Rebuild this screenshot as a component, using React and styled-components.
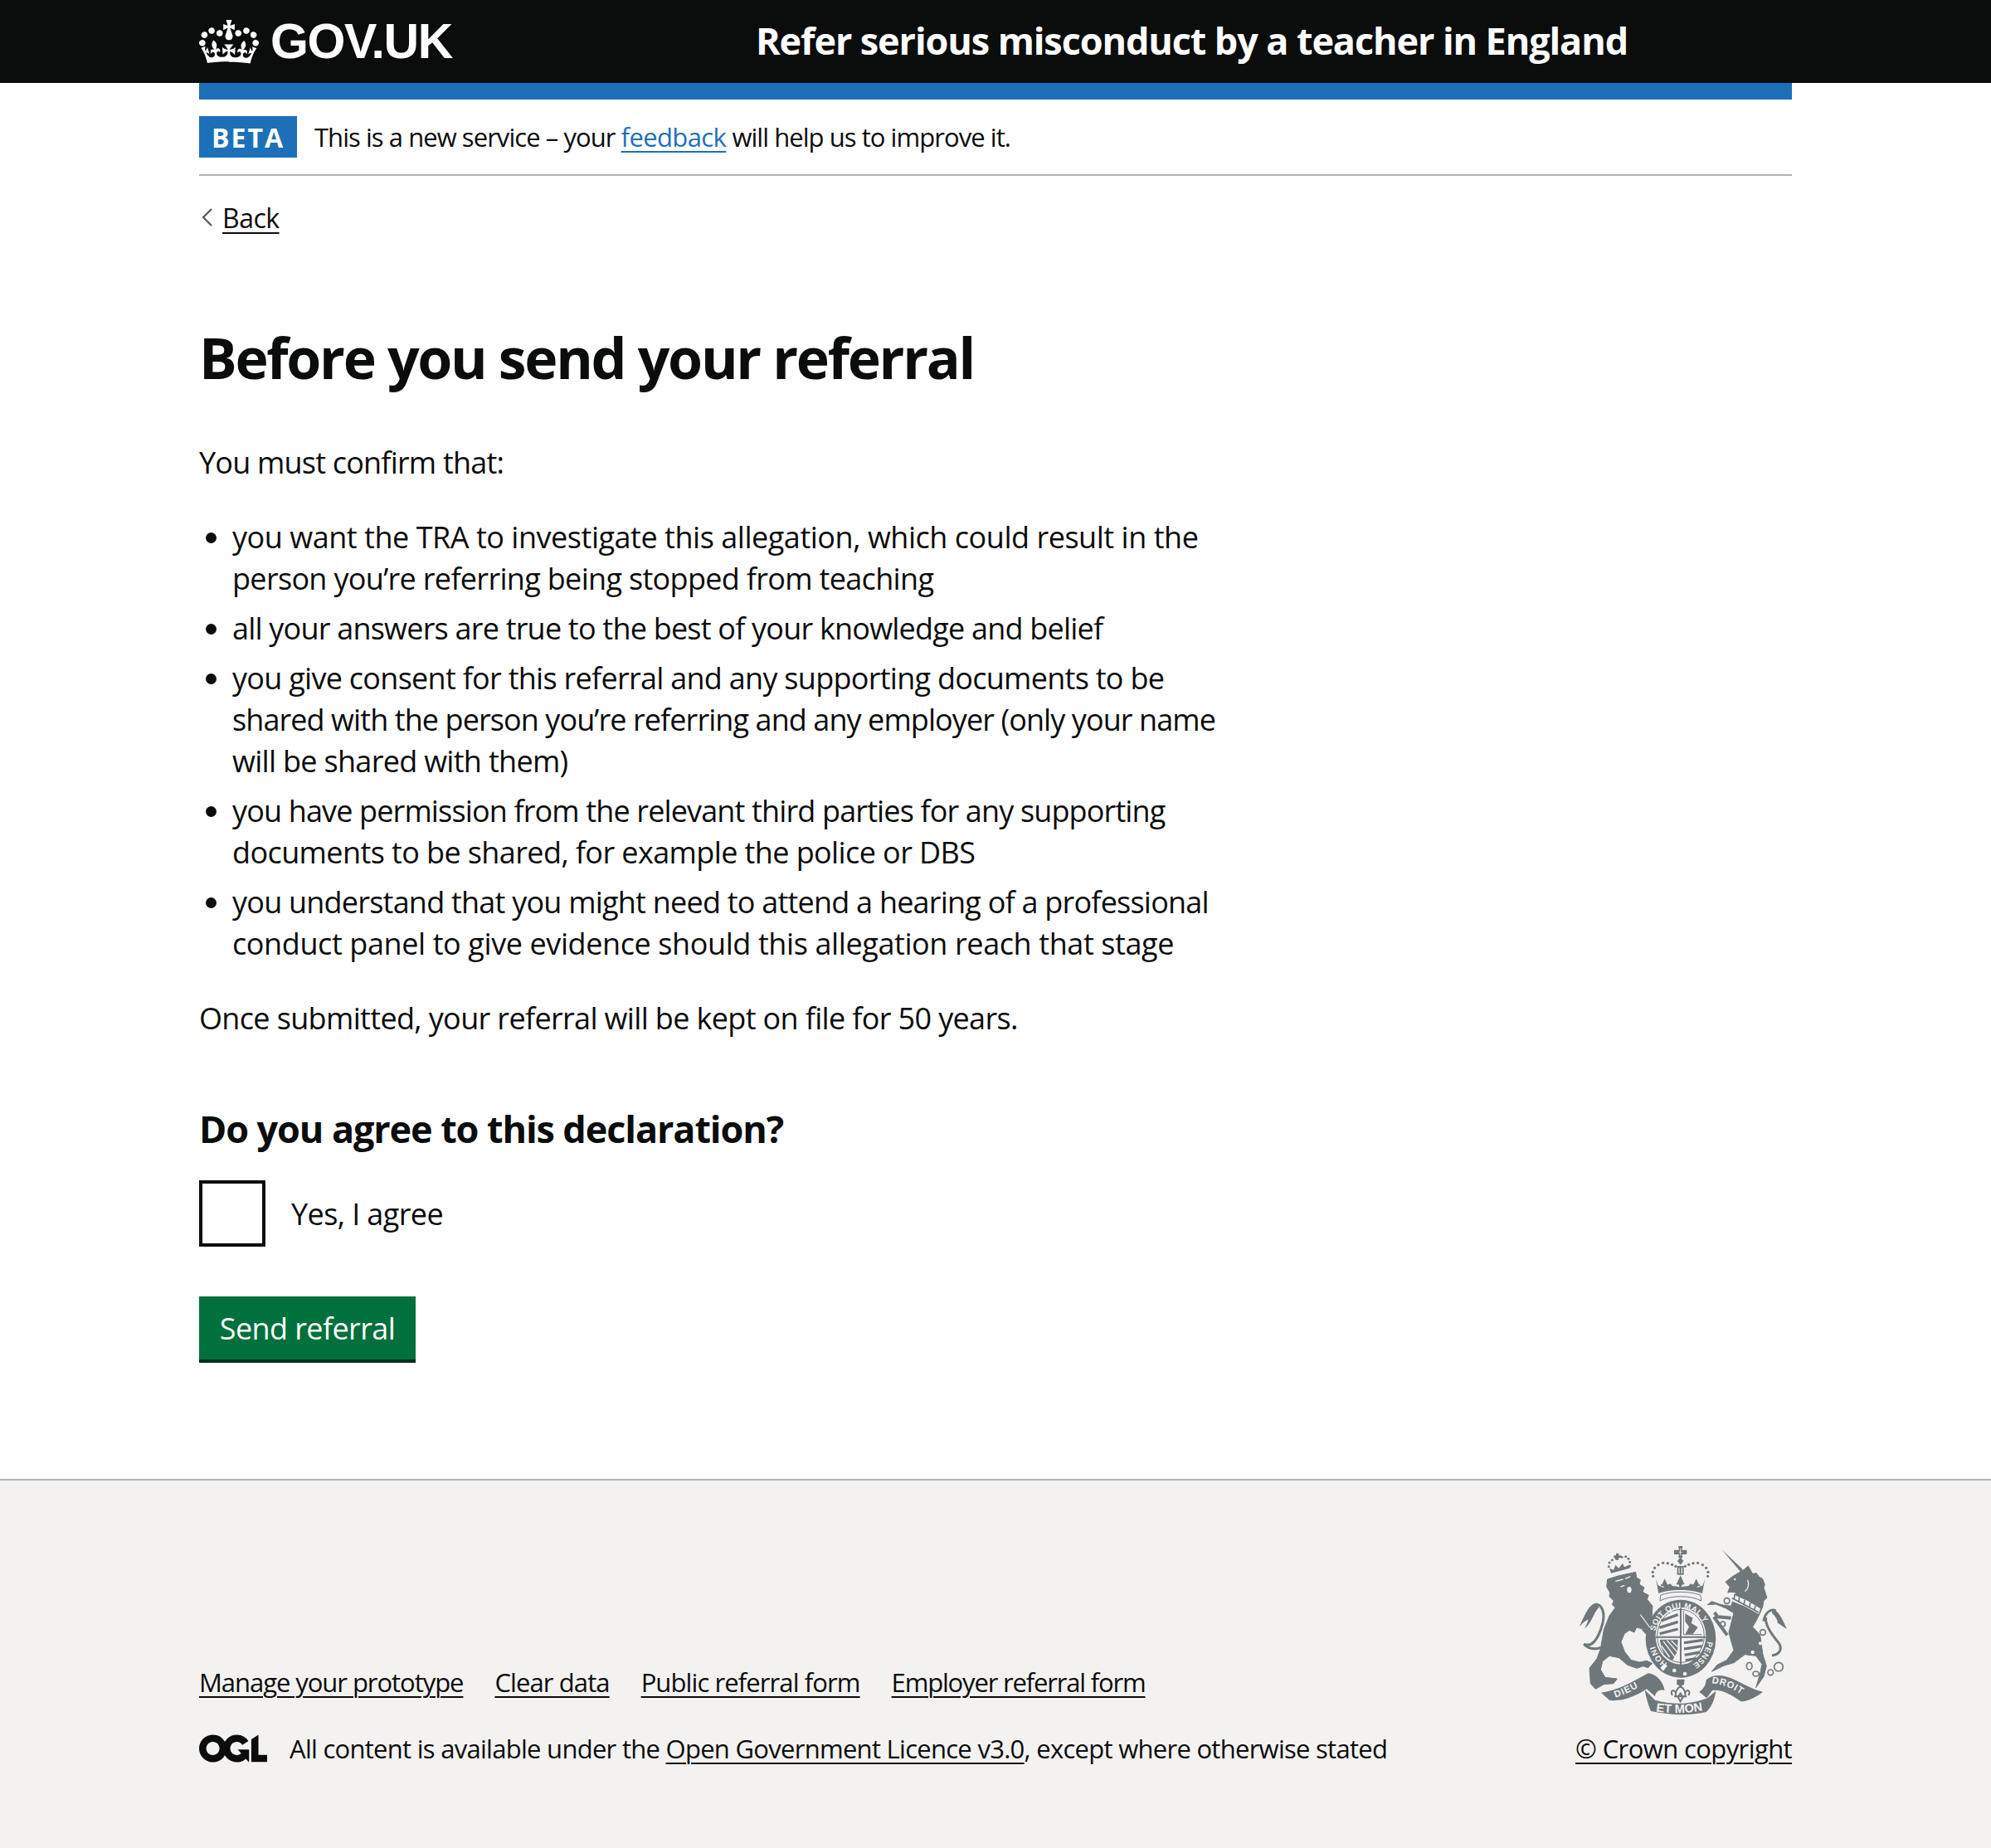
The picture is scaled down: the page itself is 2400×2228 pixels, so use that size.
import React from "react";
import styled, { createGlobalStyle } from "styled-components";

const Global = createGlobalStyle`
  html, body { margin: 0; padding: 0; background: #fff; }
  body { font-family: "Open Sans", Arial, sans-serif; color: #0b0c0c; }
  * { box-sizing: border-box; }
`;
const Page = styled.div`width: 2400px; height: 2228px; display: flex; flex-direction: column; overflow: hidden;`;
const Header = styled.header`height: 100px; background: #0b0c0c; flex: none;`;
const Container = styled.div`width: 1920px; margin: 0 auto;`;
const HeaderInner = styled(Container)`display: flex; align-items: center; height: 100px;`;
const LogoLink = styled.div`width: 671px; display: flex; align-items: center; color: #fff; flex: none;`;
const Crown = styled.svg`width: 72px; height: 53px; margin-right: 14px; flex: none;`;
const LogoText = styled.span`font-family: "Liberation Sans", Arial, sans-serif; font-weight: 700; font-size: 59px; letter-spacing: -1.4px; line-height: 1;`;
const ServiceName = styled.span`font-size: 45px; font-weight: 700; color: #fff; letter-spacing: -1.1px; white-space: nowrap; margin-bottom: 4px;`;
const BlueBar = styled(Container)`height: 20px; background: #1d70b8; flex: none;`;
const Phase = styled(Container)`height: 92px; padding-top: 20px; border-bottom: 2px solid #b1b4b6; display: flex; align-items: flex-start; flex: none;`;
const Tag = styled.strong`width: 118px; height: 50px; background: #1d70b8; color: #fff; font-size: 32px; font-weight: 700; letter-spacing: 2px; display: flex; align-items: center; justify-content: center; margin-right: 21px;`;
const PhaseText = styled.span`font-size: 31px; line-height: 50px; letter-spacing: -.95px;`;
const Link = styled.a`color: ${p => p.$blue ? "#1d70b8" : "#0b0c0c"}; letter-spacing: ${p => p.$track ?? "inherit"}; text-decoration: underline; text-decoration-thickness: 2px; text-underline-offset: 5px;`;
const Back = styled(Container)`height: 50px; margin-top: 25px; display: flex; align-items: center; font-size: 32px; letter-spacing: -.5px; flex: none;`;
const Chevron = styled.svg`width: 13px; height: 22px; margin: 0 12px 0 3px;`;
const Main = styled(Container)`padding-top: 94px; flex: 1; display: flex; flex-direction: column;`;
const H1 = styled.h1`font-size: 68px; line-height: 100px; font-weight: 700; margin: 0 0 52px; letter-spacing: -2.3px;`;
const Body = styled.p`font-size: 36px; line-height: 50px; margin: 0 0 40px; letter-spacing: ${p => p.$track}px;`;
const List = styled.ul`width: 1280px; margin: 0 0 30px; padding: 0 0 0 40px; font-size: 36px; line-height: 50px;`;
const Item = styled.li`margin-bottom: 10px;`;
const Line = styled.span`display: block; white-space: nowrap; letter-spacing: ${p => p.$track}px;`;
const H2 = styled.h2`font-size: 45px; line-height: 60px; font-weight: 700; margin: 38px 0 32px; letter-spacing: -1.1px;`;
const CheckRow = styled.label`display: flex; align-items: center; height: 80px; font-size: 36px; letter-spacing: -.6px;`;
const Box = styled.span`width: 80px; height: 80px; border: 4px solid #0b0c0c; background: #fff; margin-right: 31px;`;
const Button = styled.button`display: block; width: 261px; height: 76px; margin: 60px 0 0; border: 0; background: #00703c; color: #fff; box-shadow: 0 4px 0 #002d18; font: 36px "Open Sans", sans-serif; letter-spacing: -.6px; padding: 0;`;
const Footer = styled.footer`height: 445px; background: #f3f2f1; border-top: 2px solid #b1b4b6; flex: none;`;
const FooterInner = styled(Container)`display: flex; justify-content: space-between; height: 100%; padding-top: 77px;`;
const FooterLeft = styled.div`display: flex; flex-direction: column; justify-content: flex-start; padding-top: 141px;`;
const FooterLinks = styled.div`display: flex; gap: 38px; font-size: 31px; line-height: 50px; letter-spacing: -.9px;`;
const Licence = styled.div`display: flex; align-items: center; margin-top: 30px; font-size: 31px; line-height: 50px; letter-spacing: -.72px;`;
const Ogl = styled.svg`width: 82px; height: 34px; margin-right: 27px; flex: none;`;
const FooterRight = styled.div`display: flex; flex-direction: column; align-items: flex-end;`;
const Crest = styled.svg`width: 253.3px; height: 206.7px; margin-right: 5px; flex: none;`;
const Copy = styled.div`font-size: 31px; line-height: 50px; margin-top: 14px; letter-spacing: -.6px;`;

const CREST = "#6f777b";
const BG = "#f3f2f1";
const Dots = ({ pts, r }) => pts.map(([x, y], i) => <circle key={i} cx={x} cy={y} r={r} fill={CREST} />);
const bigCrownDots = [[308,137],[307,122],[314,107],[327,96],[344,89],[361,90],[377,95],[390,101],[506,137],[507,122],[500,107],[487,96],[470,89],[453,90],[437,95],[424,101]];
const lionCrownDots = [[148,102],[150,88],[160,78],[174,73],[195,68],[209,66],[219,74],[224,86],[224,100]];
const FONT = { fontFamily: "Liberation Sans", fontWeight: 700 };
const SOFT = { fill: CREST, stroke: CREST, strokeWidth: 3, strokeLinejoin: "round" };

function CrestArt() {
  return (
    <Crest viewBox="36 22 760 620" aria-label="Royal coat of arms">
      <defs>
        <path id="garterTop" d="M313 362 A95 108 0 0 1 505 362" />
        <path id="garterRight" d="M504 372 A97 110 0 0 1 448 458" />
        <path id="garterLeft" d="M360 452 A97 110 0 0 1 311 372" />
        <path id="ribbonLeft" d="M172 576 Q232 556 292 516" />
        <path id="ribbonRight" d="M520 524 Q592 530 656 588" />
        <path id="ribbonCentre" d="M318 626 Q410 640 500 620" />
      </defs>
      {/* lion tail */}
      <path d="M118 395 C95 405 70 397 58 382 C85 395 108 370 125 310 C135 270 125 240 100 238" fill="none" stroke={CREST} strokeWidth="9" />
      <path fill={CREST} d="M102 234 C75 238 60 280 42 318 C58 302 66 296 74 294 C70 308 64 318 60 326 C85 310 92 270 112 250 Z" />
      {/* lion */}
      <path {...SOFT} d="M143 148 L185 135 L245 122 L248 142 L262 150 L258 166 L276 178 L270 194 L292 206 L286 220 L306 245 L300 330 L272 328 L248 322 L240 340 L222 332 L204 345 L192 375 L205 410 L228 440 L258 448 L285 443 L305 452 L290 468 L272 462 L250 470 L215 458 L185 432 L150 425 L125 445 L118 475 L135 503 L178 508 L165 525 L130 528 L100 545 L82 525 L78 470 L105 435 L118 400 L130 330 L150 280 L172 250 L160 240 L166 226 L150 210 L152 196 L140 175 Z" />
      <path d="M172 155 L200 148 M207 146 L226 138 M190 175 L205 170" stroke={BG} strokeWidth="4" fill="none" />
      <ellipse cx="222" cy="186" rx="8" ry="11" fill={BG} />
      {/* lion crown */}
      <Dots pts={lionCrownDots} r="4.5" />
      <path d="M174 54 H184 V62 H192 V70 H184 V78 H174 V70 H166 V62 H174 Z" fill={CREST} />
      <path fill={CREST} d="M156 126 L150 108 L165 114 L172 96 L184 108 L198 90 L204 104 L222 96 L224 108 Z" />
      {/* centre crown */}
      <Dots pts={bigCrownDots} r="5" />
      <path fill={CREST} d="M399 28 H415 L412 42 H430 V58 H412 L415 70 H399 L402 58 H384 V42 H402 Z" />
      <path d="M401 50 H413 M407 36 V62" stroke={BG} strokeWidth="2.5" />
      <path fill={CREST} d="M407 68 L418 82 L407 96 L396 82 Z" />
      <path fill={CREST} d="M395 100 H419 V132 H395 Z" />
      <path d="M402 107 V127 M412 107 V127" stroke={BG} strokeWidth="3.5" />
      <path fill={CREST} d="M350 146 L359 165 L350 182 L341 165 Z M407 134 L418 158 L407 182 L396 158 Z M464 146 L473 165 L464 182 L455 165 Z" />
      <path d="M336 170 H364 M393 164 H421 M450 170 H478" stroke={CREST} strokeWidth="6" />
      <path fill={CREST} d="M318 146 L326 170 L345 178 L370 164 L378 172 L407 176 L436 172 L444 164 L469 178 L488 170 L496 146 L486 199 C445 183 369 183 328 199 Z" />
      <path fill={BG} stroke={CREST} strokeWidth="3" d="M335 206 C370 190 445 190 480 206 L482 226 C445 205 370 205 333 226 Z" />
      {/* garter */}
      <ellipse cx="408" cy="363" rx="127" ry="141" fill={CREST} />
      <ellipse cx="408" cy="353" rx="91" ry="103" fill={BG} />
      <ellipse cx="408" cy="353" rx="85" ry="96" fill="none" stroke={CREST} strokeWidth="3" />
      <path d="M408 250 V470 M318 357 H498" stroke={CREST} strokeWidth="6" />
      {/* quarters */}
      <path fill="none" stroke={CREST} strokeWidth="10" d="M338 298 L398 276 M331 323 L398 302 M332 345 L398 328 M420 378 L488 368 M420 400 L485 390 M422 422 L478 412 M425 441 L465 435" />
      <path fill={CREST} d="M424 272 L452 288 L446 306 L470 322 L452 346 L425 346 L438 320 L424 300 Z" />
      <path d="M418 262 L418 348 L484 348" fill="none" stroke={CREST} strokeWidth="3" />
      <path fill={CREST} d="M332 366 L398 366 L396 410 L378 442 L350 425 L338 395 Z" />
      <path stroke={BG} strokeWidth="4" fill="none" d="M345 372 L388 430 M358 368 L396 412 M338 388 L368 430 M374 370 L396 392" />
      {/* garter text */}
      <text {...FONT} fontSize="29" fill={BG} letterSpacing="1"><textPath href="#garterTop" startOffset="26">SOIT QUI MAL Y</textPath></text>
      <text {...FONT} fontSize="29" fill={BG} letterSpacing="1"><textPath href="#garterRight">PENSE</textPath></text>
      <text {...FONT} fontSize="29" fill={BG} letterSpacing="2"><textPath href="#garterLeft">HONI</textPath></text>
      {/* lion's forepaw over the garter */}
      <path d="M262 276 L296 322" stroke={BG} strokeWidth="3.5" />
      <path {...SOFT} d="M292 330 L304 345 L306 385 L296 378 L286 350 L268 330 Z" />
      {/* buckle */}
      <path d="M335 470 C340 455 352 452 360 462 L352 470 L345 480 Z" fill={BG} />
      <circle cx="385" cy="478" r="7" fill={BG} />
      <circle cx="423" cy="490" r="7" fill={BG} />
      {/* ribbons */}
      <path fill={CREST} d="M120 558 C190 548 245 512 290 488 C320 490 345 520 350 550 C330 545 318 555 315 572 L285 545 C240 575 190 592 150 585 Z" />
      <path fill={CREST} d="M500 512 C530 485 575 495 620 520 C650 535 680 550 705 555 C680 575 650 590 625 590 C590 565 555 545 522 550 L502 578 L475 555 C490 545 500 530 500 512 Z" />
      <path fill={CREST} d="M278 548 L315 585 C380 602 440 602 505 578 L535 552 C530 590 515 615 500 628 C440 642 370 640 300 625 C290 600 282 575 278 548 Z" />
      <text {...FONT} fontSize="34" fill={BG} letterSpacing="3"><textPath href="#ribbonLeft">DIEU</textPath></text>
      <text {...FONT} fontSize="34" fill={BG} letterSpacing="2"><textPath href="#ribbonRight">DROIT</textPath></text>
      <text {...FONT} fontSize="44" fill={BG}><textPath href="#ribbonCentre">ET MON</textPath></text>
      {/* fleur-de-lis */}
      <path fill={CREST} d="M394 510 H422 L420 528 L407 536 L394 528 Z" />
      <path fill="none" stroke={CREST} strokeWidth="6" d="M407 534 C420 545 428 560 422 572 C415 575 408 565 407 558 C406 565 399 575 392 572 C386 560 394 545 407 534 Z M392 560 C380 540 370 555 378 568 M422 560 C434 540 444 555 436 568 M384 572 H430 M398 574 L407 590 L416 574" />
      {/* unicorn tail */}
      <path d="M708 300 C712 268 735 252 752 262 M716 285 C712 310 735 345 760 375 C778 398 768 420 738 424" fill="none" stroke={CREST} strokeWidth="9" />
      <path fill={CREST} d="M740 256 C765 262 778 300 792 328 C775 318 768 310 758 306 C760 296 752 284 738 270 Z" />
      {/* unicorn */}
      <path fill={CREST} d="M558 42 L632 112 L625 122 Z" />
      <path {...SOFT} d="M625 120 L638 112 L652 100 L668 128 L682 126 L692 140 L704 146 L712 168 L708 178 L720 215 L708 226 L705 245 L695 270 L680 300 L668 320 L695 350 L705 420 L718 462 L708 500 L680 540 L695 490 L702 455 L680 425 L640 420 L600 450 L565 460 L545 470 L520 482 L540 458 L575 440 L600 405 L590 370 L582 340 L600 270 L570 252 L535 238 L505 240 L520 228 L555 240 L590 245 L600 215 L608 196 L590 194 L578 196 L586 176 L570 158 L595 138 L612 128 Z" />
      <path d="M590 288 L542 284 L530 268 M528 284 L576 350" fill="none" stroke={CREST} strokeWidth="12" strokeLinejoin="round" />
      <path fill={BG} d="M597 203 L650 226 L696 254 L690 274 L640 246 L590 226 Z" />
      <path d="M603 202 L601 222 M620 212 L618 232 M640 222 L636 242 M660 232 L656 252 M678 244 L674 262 M594 216 L690 268" stroke={CREST} strokeWidth="5" fill="none" />
      <path d="M650 150 C655 165 655 180 640 192" stroke={BG} strokeWidth="4" fill="none" />
      <circle cx="604" cy="148" r="3.5" fill={BG} />
      <circle cx="696" cy="380" r="6.5" fill={BG} />
      <circle cx="668" cy="412" r="6.5" fill={BG} />
      <g fill="none" stroke={CREST} strokeWidth="5">
        <circle cx="575" cy="226" r="10" />
        <circle cx="560" cy="310" r="9" />
        <circle cx="705" cy="340" r="10" />
        <ellipse cx="656" cy="462" rx="10" ry="13" />
        <ellipse cx="680" cy="490" rx="11" ry="9" />
        <circle cx="733" cy="485" r="10" />
        <circle cx="762" cy="465" r="16" />
      </g>
    </Crest>
  );
}

const ITEMS = [
  [["you want the TRA to investigate this allegation, which could result in the", -.47], ["person you’re referring being stopped from teaching", -.68]],
  [["all your answers are true to the best of your knowledge and belief", -.79]],
  [["you give consent for this referral and any supporting documents to be", -.72], ["shared with the person you’re referring and any employer (only your name", -.92], ["will be shared with them)", -.7]],
  [["you have permission from the relevant third parties for any supporting", -.86], ["documents to be shared, for example the police or DBS", -.6]],
  [["you understand that you might need to attend a hearing of a professional", -.78], ["conduct panel to give evidence should this allegation reach that stage", -.4]],
];

export default function App() {
  return (
    <Page>
      <Global />
      <Header>
        <HeaderInner>
          <LogoLink>
            <Crown viewBox="0 0 132 97" aria-hidden="true">
              <path fill="currentColor" fillRule="evenodd" d="M25 30.2c3.5 1.5 7.7-.2 9.1-3.7 1.5-3.6-.2-7.8-3.9-9.2-3.6-1.4-7.6.3-9.1 3.9-1.4 3.5.3 7.5 3.9 9zM9 39.5c3.6 1.5 7.8-.2 9.2-3.7 1.5-3.6-.2-7.8-3.9-9.1-3.6-1.5-7.6.2-9.1 3.8-1.4 3.5.3 7.5 3.8 9zM4.4 57.2c3.5 1.5 7.7-.2 9.1-3.8 1.5-3.6-.2-7.7-3.9-9.1-3.5-1.5-7.6.3-9.1 3.8-1.4 3.5.3 7.6 3.9 9.1zm38.3-21.4c3.5 1.5 7.7-.2 9.1-3.8 1.5-3.6-.2-7.7-3.9-9.1-3.6-1.5-7.6.3-9.1 3.8-1.3 3.6.4 7.7 3.9 9.1zm64.4-5.6c-3.6 1.5-7.8-.2-9.1-3.7-1.5-3.6.2-7.8 3.8-9.2 3.6-1.4 7.7.3 9.2 3.9 1.3 3.5-.4 7.5-3.9 9zm15.9 9.3c-3.6 1.5-7.7-.2-9.1-3.7-1.5-3.6.2-7.8 3.7-9.1 3.6-1.5 7.7.2 9.2 3.8 1.5 3.5-.3 7.5-3.8 9zm4.7 17.7c-3.6 1.5-7.8-.2-9.2-3.8-1.5-3.6.2-7.7 3.9-9.1 3.6-1.5 7.7.3 9.2 3.8 1.3 3.5-.4 7.6-3.9 9.1zM89.3 35.8c-3.6 1.5-7.8-.2-9.2-3.8-1.4-3.6.2-7.7 3.9-9.1 3.6-1.5 7.7.3 9.2 3.8 1.4 3.6-.3 7.7-3.9 9.1zM69.7 17.7l8.9 4.7V9.3l-8.9 2.8c-.2-.3-.5-.6-.9-.9L72.4 0H59.6l3.6 11.2c-.3.3-.6.5-.9.9l-8.8-2.8v13.1l8.8-4.7c.3.3.6.7.9.9l-5 15.4v.1c-.2.8-.4 1.6-.4 2.4 0 4.1 3.1 7.5 7 8.1h.2c.3 0 .7.1 1 .1.4 0 .7 0 1-.1h.2c4-.6 7.1-4.1 7.1-8.1 0-.8-.1-1.7-.4-2.4V34l-5.1-15.4c.4-.2.7-.6 1-.9zM66 92.8c16.9 0 32.8 1.1 47.1 3.2 4-16.9 8.9-26.7 14-33.5l-9.6-3.4c1 4.9 1.1 7.2 0 10.2-1.5-1.4-3-4.3-4.2-8.7L108.6 76c2.8-2 5-3.2 7.5-3.3-4.4 9.4-10 11.9-13.6 11.2-4.3-.8-6.3-4.6-5.6-7.9 1-4.7 5.7-5.9 8-.5 4.3-8.7-3-11.4-7.6-8.8 7.1-7.2 7.9-13.5 2.1-21.1-8 6.1-8.1 12.3-4.5 20.8-4.7-5.4-12.1-2.5-9.5 6.2 3.4-5.2 7.9-2 7.2 3.1-.6 4.3-6.4 7.8-13.5 7.2-10.3-.9-10.9-8-11.2-13 2.5-.5 7.1 1.8 11 7.3L80.2 60c-4.1 4.4-8 5.3-12.3 5.4 1.4-4.4 8-11.6 8-11.6H55.5s6.4 7.2 7.9 11.6c-4.2-.1-8-1-12.3-5.4l1.4 16.4c3.9-5.5 8.5-7.7 10.9-7.3-.3 5-.7 12.1-11 13-7.2.6-12.9-2.9-13.5-7.2-.7-5 3.8-8.3 7.1-3.1 2.7-8.7-4.6-11.6-9.4-6.2 3.7-8.5 3.6-14.7-4.6-20.8-5.8 7.6-5 13.9 2.2 21.1-4.7-2.6-11.9.1-7.7 8.8 2.3-5.5 7.1-4.2 8.1.5.7 3.3-1.3 7.1-5.7 7.9-3.5.7-9-1.8-13.5-11.2 2.5.1 4.7 1.3 7.5 3.3l-4.7-15.4c-1.2 4.4-2.7 7.2-4.3 8.7-1.1-3-.9-5.3 0-10.2l-9.5 3.4c5 6.9 9.9 16.7 14 33.5 14.8-2.1 30.8-3.2 47.7-3.2z" />
            </Crown>
            <LogoText>GOV.UK</LogoText>
          </LogoLink>
          <ServiceName>Refer serious misconduct by a teacher in England</ServiceName>
        </HeaderInner>
      </Header>
      <BlueBar />
      <Phase>
        <Tag>BETA</Tag>
        <PhaseText>This is a new service – your <Link $blue $track="-.6px">feedback</Link> will help us to improve it.</PhaseText>
      </Phase>
      <Back>
        <Chevron viewBox="0 0 13 22" aria-hidden="true"><path d="M12 1 L2 11 L12 21" fill="none" stroke="#505a5f" strokeWidth="2.2" /></Chevron>
        <Link>Back</Link>
      </Back>
      <Main>
        <H1>Before you send your referral</H1>
        <Body $track={-.8}>You must confirm that:</Body>
        <List>
          {ITEMS.map((lines, i) => (
            <Item key={i}>
              {lines.map(([text, track]) => <Line key={text} $track={track}>{text}</Line>)}
            </Item>
          ))}
        </List>
        <Body $track={-.65}>Once submitted, your referral will be kept on file for 50 years.</Body>
        <H2>Do you agree to this declaration?</H2>
        <CheckRow><Box />Yes, I agree</CheckRow>
        <Button>Send referral</Button>
      </Main>
      <Footer>
        <FooterInner>
          <FooterLeft>
            <FooterLinks>
              <Link $track="-1.05px">Manage your prototype</Link>
              <Link>Clear data</Link>
              <Link>Public referral form</Link>
              <Link $track="-1.18px">Employer referral form</Link>
            </FooterLinks>
            <Licence>
              <Ogl viewBox="0 0 483.2 195.7" aria-hidden="true">
                <path fill="currentColor" d="M421.5 142.8V.1l-50.7 32.3v161.1h112.4v-50.7zm-122.3-9.6A47.12 47.12 0 0 1 221 97.8c0-26 21.1-47.1 47.1-47.1 16.7 0 31.4 8.7 39.7 21.8l42.7-27.2A97.63 97.63 0 0 0 268.1 0c-36.5 0-68.3 20.1-85.1 49.7A98 98 0 0 0 97.8 0C43.9 0 0 43.9 0 97.8s43.9 97.8 97.8 97.8c36.5 0 68.3-20.1 85.1-49.7a97.76 97.76 0 0 0 149.6 25.4l19.4 22.2h3v-87.8h-80l24.3 27.5zM97.8 145c-26 0-47.1-21.1-47.1-47.1s21.1-47.1 47.1-47.1 47.2 21.2 47.2 47.2-21.2 47-47.2 47z" />
              </Ogl>
              <span>All content is available under the <Link>Open Government Licence v3.0</Link>, except where otherwise stated</span>
            </Licence>
          </FooterLeft>
          <FooterRight>
            <CrestArt />
            <Copy><Link>© Crown copyright</Link></Copy>
          </FooterRight>
        </FooterInner>
      </Footer>
    </Page>
  );
}
